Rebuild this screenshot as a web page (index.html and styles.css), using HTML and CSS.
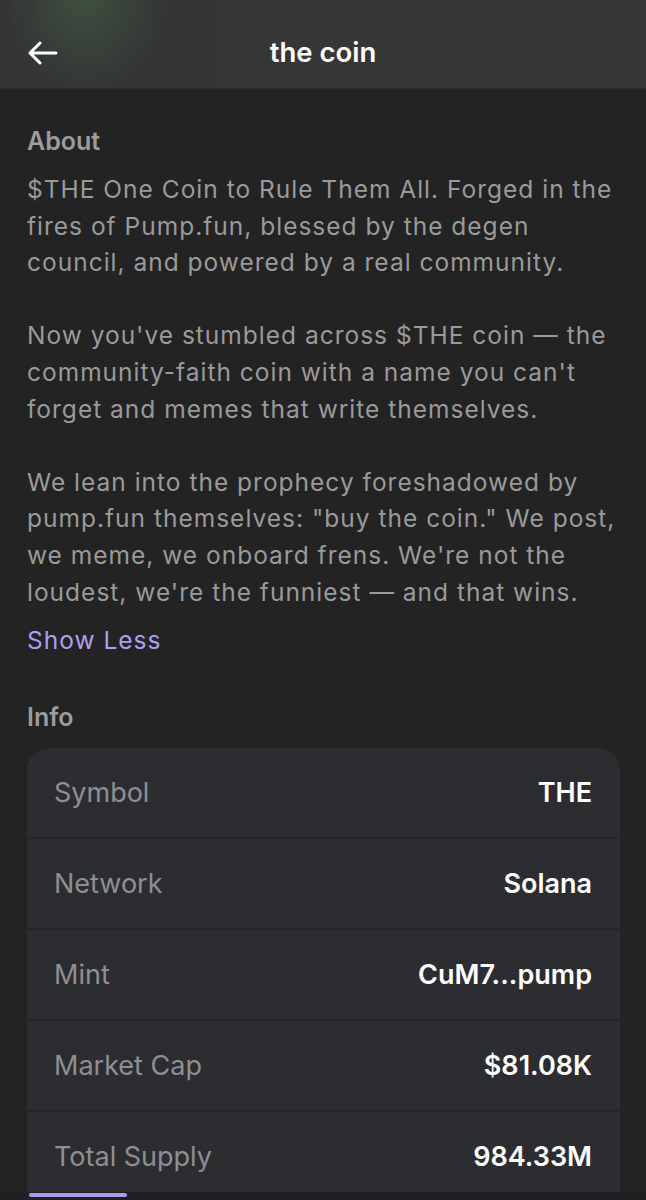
FILE: index.html
```html
<!DOCTYPE html>
<html>
<head>
<meta charset="utf-8">
<link rel="stylesheet" href="styles.css">
</head>
<body>
<header class="topbar">
  <svg class="back" width="32" height="24" viewBox="0 0 32 24"><path d="M29 12H3M13 2L3 12l10 10" fill="none" stroke="#fff" stroke-width="3" stroke-linecap="round" stroke-linejoin="round"/></svg>
  <h1 class="title">the coin</h1>
</header>
<main class="content">
  <h2 class="section">About</h2>
  <div class="about">
    <p>$THE One Coin to Rule Them All. Forged in the fires of Pump.fun, blessed by the degen council, and powered by a real community.</p>
    <p>Now you've stumbled across $THE coin — the community-faith coin with a name you can't forget and memes that write themselves.</p>
    <p>We lean into the prophecy foreshadowed by pump.fun themselves: "buy the coin." We post, we meme, we onboard frens. We're not the loudest, we're the funniest — and that wins.</p>
  </div>
  <a class="toggle">Show Less</a>
  <h2 class="section info-head">Info</h2>
  <div class="card">
    <div class="row"><span class="label">Symbol</span><span class="value">THE</span></div>
    <div class="row"><span class="label">Network</span><span class="value">Solana</span></div>
    <div class="row"><span class="label">Mint</span><span class="value">CuM7...pump</span></div>
    <div class="row"><span class="label">Market Cap</span><span class="value">$81.08K</span></div>
    <div class="row"><span class="label">Total Supply</span><span class="value">984.33M</span></div>
  </div>
</main>
<div class="bottom"><div class="indicator"></div></div>
</body>
</html>
```
FILE: styles.css
```css
* { box-sizing: border-box; }
html, body { margin: 0; padding: 0; }
body {
  width: 646px;
  height: 1200px;
  overflow: hidden;
  background: #232323;
  font-family: Inter, Roboto, "Liberation Sans", sans-serif;
  position: relative;
}
.topbar {
  height: 89px;
  display: flex;
  align-items: center;
  justify-content: center;
  position: relative;
  background:
    radial-gradient(ellipse 80px 90px at 85px 0px, rgba(70,100,70,0.55), rgba(60,80,60,0) 100%),
    linear-gradient(90deg, #333535 0%, #353737 50%, #363738 100%);
  border-bottom: 1px solid #2a2a2a;
}
.back {
  position: absolute;
  left: 27px;
  top: 41px;
}
.title {
  margin: 0;
  color: #ffffff;
  font-size: 27.5px;
  font-weight: 600;
  padding-top: 16px;
}
.content {
  padding: 36px 27px 0 27px;
}
.section {
  margin: 0;
  color: #9d9d9d;
  font-size: 25px;
  font-weight: 600;
  line-height: 32px;
}
.about {
  margin-top: 14px;
  color: #9a9a9a;
  font-size: 24.5px;
  line-height: 36.6px;
  letter-spacing: 1px;
}
.about p { margin: 0 0 36.6px 0; }
.about p:last-child { margin-bottom: 0; }
.toggle {
  display: block;
  margin-top: 14px;
  color: #ae9ff0;
  font-size: 24.5px;
  line-height: 32px;
  letter-spacing: 1px;
}
.info-head { margin-top: 45px; }
.card {
  margin-top: 15px;
  width: 593px;
  background: #2c2d31;
  border-radius: 22px 22px 0 0;
  overflow: hidden;
}
.row {
  height: 91px;
  display: flex;
  align-items: center;
  justify-content: space-between;
  padding: 0 28px 0 27px;
  border-bottom: 2px solid #25262a;
}
.label {
  color: #8f8f92;
  font-size: 27px;
}
.value {
  color: #ffffff;
  font-size: 27px;
  font-weight: 600;
}
.bottom {
  position: absolute;
  left: 0;
  right: 0;
  top: 1192px;
  height: 8px;
  background: #202022;
}
.indicator {
  margin-left: 29px;
  width: 98px;
  height: 4px;
  border-radius: 2px;
  background: #a99cf0;
  margin-top: 1px;
}
```
